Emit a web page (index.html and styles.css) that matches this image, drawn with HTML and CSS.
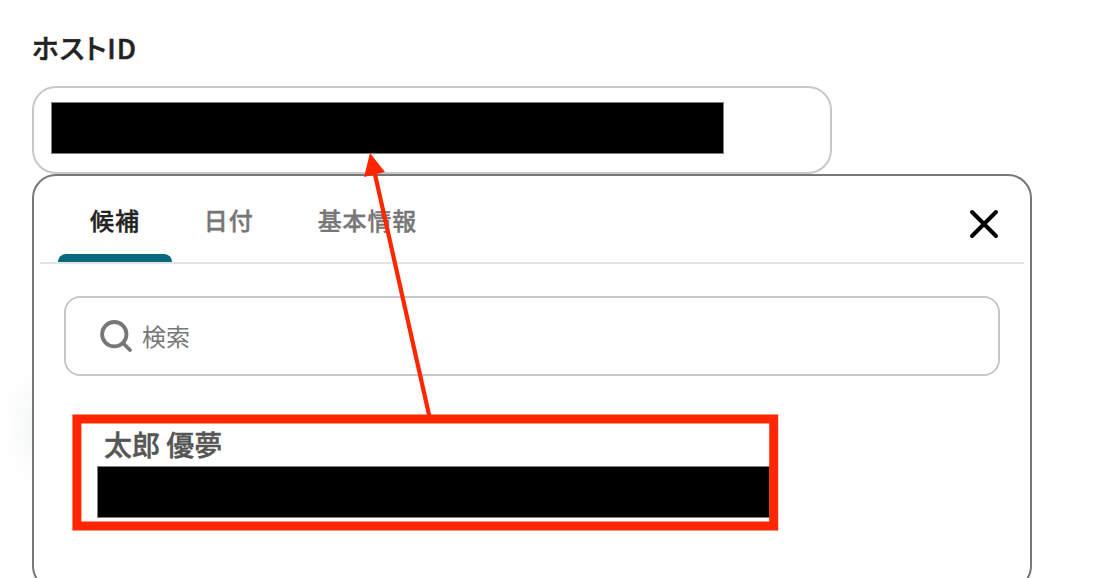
FILE: index.html
```
<!DOCTYPE html>
<html lang="ja">
<head>
    <meta charset="UTF-8">
    <title>ホストID</title>
    <link rel="stylesheet" href="styles.css">
</head>
<body>
    <div class="page">
        <label class="field-label">ホストID</label>
        <div class="field">
            <div class="mask"></div>
        </div>
        <div class="panel">
            <div class="tabs">
                <div class="tab active">候補</div>
                <div class="tab">日付</div>
                <div class="tab">基本情報</div>
                <svg class="close" width="32" height="32" viewBox="0 0 32 32">
                    <path d="M4 4L28 28M28 4L4 28" />
                </svg>
            </div>
            <div class="search">
                <svg class="search-icon" width="34" height="34" viewBox="0 0 34 34">
                    <circle cx="15.3" cy="15.2" r="12.2" />
                    <path d="M24 24L31 31" />
                </svg>
                <span>検索</span>
            </div>
            <div class="option">
                <div class="option-name">太郎 優夢</div>
                <div class="mask"></div>
            </div>
        </div>
        <svg class="notes" width="1100" height="578" viewBox="0 0 1100 578">
            <rect x="76.9" y="419" width="696.8" height="107" />
            <path class="line" d="M374 170L429.3 416" />
            <path class="head" d="M370 153L385 172L364 177Z" />
        </svg>
    </div>
</body>
</html>
```
FILE: styles.css
```
body {
    margin: 0;
    background: #fff;
    font-family: "Noto Sans CJK JP", sans-serif;
    overflow: hidden;
}
.page {
    position: relative;
    box-sizing: border-box;
    height: 578px;
    padding: 28px 32px 0;
    overflow: hidden;
    /* sombra suave a la izquierda del panel */
    background: radial-gradient(ellipse 38px 64px at 40px 425px, #f0f2f2, #f9fafa 45%, #fff);
}
.field-label {
    display: block;
    height: 58px;
    line-height: 39px;
    font-size: 27.5px;
    font-weight: 500;
    font-feature-settings: "palt";
    letter-spacing: 0.9px;
    -webkit-text-stroke: 0.5px;
    color: #222;
}
.field {
    box-sizing: border-box;
    width: 800px;
    height: 88px;
    padding: 14px 17px;
    border: 2px solid #c8c8c8;
    border-radius: 24px;
    background: #fff;
}
.mask {
    box-sizing: border-box;
    width: 673px;
    height: 52px;
    border: 1px solid #808080;
    background: #000;
}
.panel {
    box-sizing: border-box;
    width: 1000px;
    height: 416px;
    padding: 0 6px;
    border: 2px solid #777;
    border-radius: 24px;
    background: #fff;
}
.tabs {
    display: flex;
    box-sizing: border-box;
    height: 88px;
    padding: 0 24px 0 18px;
    border-bottom: 2px solid #e4e4e4;
}
.tab {
    box-sizing: border-box;
    height: 86px;
    padding: 0 32px;
    line-height: 88px;
    font-size: 24px;
    font-weight: 500;
    letter-spacing: 0.9px;
    -webkit-text-stroke: 0.4px;
    color: #777;
}
.tab.active {
    color: #222;
}
.tab.active::after {
    content: "";
    display: block;
    height: 8px;
    margin: -10px -32px 0;
    border-radius: 8px 8px 0 0;
    background: #086a82;
}
.close {
    margin: 32px 0 0 auto;
    fill: none;
    stroke: #000;
    stroke-width: 4;
    stroke-linecap: round;
}
.search {
    display: flex;
    align-items: center;
    box-sizing: border-box;
    height: 80px;
    margin: 32px 24px 0;
    padding-left: 33px;
    border: 2px solid #c8c8c8;
    border-radius: 16px;
    font-size: 24px;
    color: #777;
}
.search span {
    padding-bottom: 2px;
}
.search-icon {
    margin-right: 9px;
    fill: none;
    stroke: #777;
    stroke-width: 3.8;
    stroke-linecap: round;
}
.option {
    padding: 48px 0 0 57px;
}
.option-name {
    height: 42px;
    padding-left: 7px;
    line-height: 40px;
    font-size: 28px;
    font-weight: 500;
    -webkit-text-stroke: 0.4px;
    color: #555;
}
/* recuadro y flecha por encima del formulario */
.notes {
    position: absolute;
    top: 0;
    left: 0;
    fill: none;
    stroke: #ff2600;
    stroke-width: 9;
}
.notes .line {
    stroke-width: 4.2;
}
.notes .head {
    fill: #ff2600;
    stroke: none;
}
```
